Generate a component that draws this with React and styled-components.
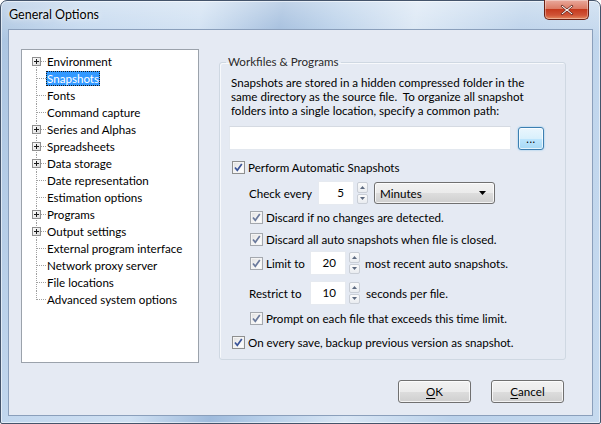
import React from 'react';
import styled, { createGlobalStyle } from 'styled-components';

const Global = createGlobalStyle`
  html, body { margin: 0; padding: 0; }
  body {
    width: 601px; height: 424px; overflow: hidden;
    font-family: Lato, "Noto Sans", sans-serif;
    font-size: 11.6px; color: #000;
    background: #fff;
  }
  * { box-sizing: border-box; }
`;

const Window = styled.div`
  width: 601px; height: 424px;
  border: 1px solid #44546b;
  border-radius: 7px 7px 2px 2px;
  background:
    linear-gradient(180deg, rgba(255,255,255,0.35) 0%, rgba(255,255,255,0) 40px),
    linear-gradient(100deg, #a9c3e0 0%, #c2d7ee 12%, #cfe0f2 30%, #9fbbdc 42%, #b7cfe9 50%, #d9e6f4 62%, #bad1ea 78%, #c6daef 100%);
  box-shadow: inset 0 0 0 1px rgba(255,255,255,0.55);
  display: flex; flex-direction: column;
`;

const TitleBar = styled.div`
  height: 28px; flex: none;
  display: flex; align-items: flex-start; justify-content: space-between;
  padding-left: 8px; padding-right: 11px;
`;

const Title = styled.div`
  margin-top: 6px;
  font-size: 12.5px; color: #000;
  text-shadow: 0 0 6px rgba(255,255,255,0.9), 0 0 2px rgba(255,255,255,0.9);
`;

const CloseButton = styled.div`
  width: 45px; height: 20px; margin-top: -1px;
  border: 1px solid #6b2013; border-top: none;
  border-radius: 0 0 5px 5px;
  background: linear-gradient(180deg, #e9a99c 0%, #dc7c66 45%, #c53a1e 50%, #d05437 80%, #e58a5f 100%);
  box-shadow: inset 0 0 0 1px rgba(255,255,255,0.35);
  display: flex; align-items: center; justify-content: center;
`;

const Client = styled.div`
  flex: 1;
  margin: 0 7px 7px 7px;
  border: 1px solid #8a9fbb;
  background: #e5eaf3;
  display: flex; flex-direction: column;
`;

const Body = styled.div`
  display: flex; align-items: flex-start;
  padding: 19px 0 0 12px;
`;

const Tree = styled.div`
  width: 178px; height: 314px; flex: none;
  background: #fff;
  border: 1px solid #9ba2ab;
  padding-top: 3px;
`;

const TreeRow = styled.div`
  height: 17px;
  display: flex; align-items: center;
`;

const TreeLabel = styled.span`
  height: 15px; line-height: 15px;
  padding: 0 1px;
  white-space: nowrap;
  color: ${p => (p.$selected ? '#fff' : '#000')};
  background: ${p => (p.$selected ? '#3399ff' : 'transparent')};
  outline: ${p => (p.$selected ? '1px dotted #1a1a1a' : 'none')};
  outline-offset: -1px;
`;

const Group = styled.fieldset`
  width: 347px; height: 305px;
  margin: 6px 0 0 20px;
  padding: 0 0 0 9px;
  border: 1px solid #cfd8e2;
  border-radius: 3px;
  box-shadow: inset 1px 1px 0 #f7f9fc;
  min-width: 0;
`;

const Legend = styled.legend`
  margin-left: -3px;
  padding: 0 2px;
  line-height: 14px;
  color: #2b2b2b;
`;

const Paragraph = styled.p`
  margin: 7px 0 0 2px;
  line-height: 14px;
  white-space: nowrap;
`;

const PathRow = styled.div`
  display: flex; align-items: center; gap: 7px;
  margin-top: 8px;
`;

const PathInput = styled.div`
  width: 282px; height: 24px;
  background: #fff;
  border: 1px solid #e3e8ef;
  border-top-color: #d5dae2;
`;

const BrowseButton = styled.div`
  width: 26px; height: 23px;
  border: 1px solid #3c7fb1;
  border-radius: 3px;
  background: linear-gradient(180deg, #eaf6fd 0%, #d9f0fc 50%, #bee6fd 51%, #a7d9f5 100%);
  box-shadow: 0 0 2px #7fc0ec, inset 0 0 0 1px rgba(255,255,255,0.7);
  font-size: 11px; line-height: 1;
  display: flex; align-items: flex-end; justify-content: center;
  padding-bottom: 5px;
  letter-spacing: 0.5px;
`;

const Row = styled.div`
  display: flex; align-items: center;
  height: ${p => p.$h || 22}px;
  margin-top: ${p => p.$mt || 0}px;
  margin-left: ${p => p.$indent || 0}px;
  white-space: nowrap;
`;

const Label = styled.span`
  display: inline-block;
  width: ${p => (p.$w ? `${p.$w}px` : 'auto')};
  flex: none;
`;

const CheckLabel = styled.label`
  display: flex; align-items: center; gap: 3px;
  width: ${p => (p.$w ? `${p.$w}px` : 'auto')};
  flex: none;
`;

const Box = styled.span`
  width: 13px; height: 13px; flex: none;
  border: 1px solid ${p => (p.$muted ? '#a4a8ae' : '#8e8f8f')};
  background: linear-gradient(135deg, #dedede 0%, #f7f7f7 60%, #ffffff 100%);
  box-shadow: inset 0 0 0 1px #f4f4f4;
  display: flex; align-items: center; justify-content: center;
`;

const SpinInput = styled.div`
  width: 36px; height: 24px; flex: none;
  background: #fff;
  border: 1px solid #e6eaf0;
  text-align: right;
  padding-right: 9px;
  line-height: 22px;
`;

const Spin = styled.div`
  width: 11px; height: 22px; flex: none;
  margin: 0 ${p => p.$after || 5}px 0 ${p => p.$before || 3}px;
  display: flex; flex-direction: column; gap: 1px;
`;

const SpinButton = styled.div`
  flex: 1;
  border: 1px solid #c9ced6;
  border-radius: 2px;
  background: linear-gradient(180deg, #fbfbfb 0%, #e9ecf0 100%);
  display: flex; align-items: center; justify-content: center;
`;

const Combo = styled.div`
  width: 121px; height: 22px; flex: none;
  border: 1px solid #707070;
  border-radius: 3px;
  background: linear-gradient(180deg, #f2f2f2 0%, #ebebeb 50%, #dddddd 51%, #cfcfcf 100%);
  box-shadow: inset 0 0 0 1px rgba(255,255,255,0.75);
  display: flex; align-items: center; justify-content: space-between;
  padding: 0 8px 0 5px;
`;

const Footer = styled.div`
  display: flex; justify-content: flex-end; gap: 20px;
  margin-top: 17px;
  padding-right: 28px;
`;

const DialogButton = styled.div`
  width: 73px; height: 23px;
  border: 1px solid #707070;
  border-radius: 3px;
  background: linear-gradient(180deg, #f2f2f2 0%, #ebebeb 50%, #dddddd 51%, #cfcfcf 100%);
  box-shadow: inset 0 0 0 1px rgba(255,255,255,0.75);
  display: flex; align-items: center; justify-content: center;
  u { text-decoration: underline; text-underline-offset: 2px; }
`;

const treeItems = [
  { label: 'Environment', expandable: true },
  { label: 'Snapshots', selected: true },
  { label: 'Fonts' },
  { label: 'Command capture' },
  { label: 'Series and Alphas', expandable: true },
  { label: 'Spreadsheets', expandable: true },
  { label: 'Data storage', expandable: true },
  { label: 'Date representation' },
  { label: 'Estimation options' },
  { label: 'Programs', expandable: true },
  { label: 'Output settings', expandable: true },
  { label: 'External program interface' },
  { label: 'Network proxy server' },
  { label: 'File locations' },
  { label: 'Advanced system options' },
];

function Connector({ first, last, expandable }) {
  return (
    <svg width="24" height="17" style={{ flex: 'none' }}>
      <line x1="14.5" x2="14.5" y1={first ? 8 : 0} y2={last ? 9 : 17}
        stroke="#a0a0a0" strokeDasharray="1 1" />
      <line x1="15" x2="24" y1="8.5" y2="8.5" stroke="#a0a0a0" strokeDasharray="1 1" />
      {expandable && (
        <g>
          <defs>
            <linearGradient id="pb" x1="0" y1="0" x2="1" y2="1">
              <stop offset="0" stopColor="#ffffff" />
              <stop offset="1" stopColor="#d8d8d8" />
            </linearGradient>
          </defs>
          <rect x="10.5" y="4.5" width="8" height="8" fill="url(#pb)" stroke="#8f8f8f" />
          <line x1="12" x2="17" y1="8.5" y2="8.5" stroke="#1c1c1c" />
          <line x1="14.5" x2="14.5" y1="6" y2="11" stroke="#1c1c1c" />
        </g>
      )}
    </svg>
  );
}

function Check({ muted }) {
  return (
    <Box $muted={muted}>
      <svg width="9" height="9" viewBox="0 0 9 9">
        <path d="M1 4.5 L3.3 7.3 L7.8 1" fill="none"
          stroke={muted ? '#6b7a9c' : '#3a5499'} strokeWidth="1.7" />
      </svg>
    </Box>
  );
}

function Arrow({ up }) {
  return (
    <svg width="5" height="3" viewBox="0 0 5 3">
      <path d={up ? 'M0 3 L2.5 0 L5 3 Z' : 'M0 0 L2.5 3 L5 0 Z'} fill="#5d6a80" />
    </svg>
  );
}

function Spinner({ value, before, after }) {
  return (
    <>
      <SpinInput>{value}</SpinInput>
      <Spin $before={before} $after={after}>
        <SpinButton><Arrow up /></SpinButton>
        <SpinButton><Arrow /></SpinButton>
      </Spin>
    </>
  );
}

export default function App() {
  return (
    <>
      <Global />
      <Window>
        <TitleBar>
          <Title>General Options</Title>
          <CloseButton>
            <svg width="14" height="12" viewBox="0 0 14 12">
              <path d="M2 1 L7 5 L12 1 L13 2.2 L8.5 6 L13 9.8 L12 11 L7 7 L2 11 L1 9.8 L5.5 6 L1 2.2 Z"
                fill="#fff" stroke="#5a1a10" strokeWidth="0.8" strokeLinejoin="round" />
            </svg>
          </CloseButton>
        </TitleBar>
        <Client>
          <Body>
            <Tree>
              {treeItems.map((it, i) => (
                <TreeRow key={it.label}>
                  <Connector first={i === 0} last={i === treeItems.length - 1} expandable={it.expandable} />
                  <TreeLabel $selected={it.selected}>{it.label}</TreeLabel>
                </TreeRow>
              ))}
            </Tree>
            <Group>
              <Legend>Workfiles &amp; Programs</Legend>
              <Paragraph>
                Snapshots are stored in a hidden compressed folder in the<br />
                same directory as the source file.&nbsp; To organize all snapshot<br />
                folders into a single location, specify a common path:
              </Paragraph>
              <PathRow>
                <PathInput />
                <BrowseButton>...</BrowseButton>
              </PathRow>
              <Row $mt={6} $indent={3}>
                <CheckLabel><Check />Perform Automatic Snapshots</CheckLabel>
              </Row>
              <Row $mt={3} $h={24} $indent={20}>
                <Label $w={69}>Check every</Label>
                <Spinner value="5" before={3} after={6} />
                <Combo>
                  <span>Minutes</span>
                  <svg width="7" height="4" viewBox="0 0 7 4"><path d="M0 0 H7 L3.5 4 Z" fill="#000" /></svg>
                </Combo>
              </Row>
              <Row $mt={1} $indent={21}>
                <CheckLabel><Check muted />Discard if no changes are detected.</CheckLabel>
              </Row>
              <Row $indent={21}>
                <CheckLabel><Check muted />Discard all auto snapshots when file is closed.</CheckLabel>
              </Row>
              <Row $mt={1} $h={24} $indent={21}>
                <CheckLabel $w={60}><Check muted />Limit to</CheckLabel>
                <Spinner value="20" before={3} after={5} />
                <span>most recent auto snapshots.</span>
              </Row>
              <Row $mt={6} $h={24} $indent={20}>
                <Label $w={61}>Restrict to</Label>
                <Spinner value="10" before={3} after={6} />
                <span>seconds per file.</span>
              </Row>
              <Row $mt={2} $indent={21}>
                <CheckLabel><Check muted />Prompt on each file that exceeds this time limit.</CheckLabel>
              </Row>
              <Row $mt={2} $indent={3}>
                <CheckLabel><Check />On every save, backup previous version as snapshot.</CheckLabel>
              </Row>
            </Group>
          </Body>
          <Footer>
            <DialogButton><span><u>O</u>K</span></DialogButton>
            <DialogButton><span><u>C</u>ancel</span></DialogButton>
          </Footer>
        </Client>
      </Window>
    </>
  );
}
